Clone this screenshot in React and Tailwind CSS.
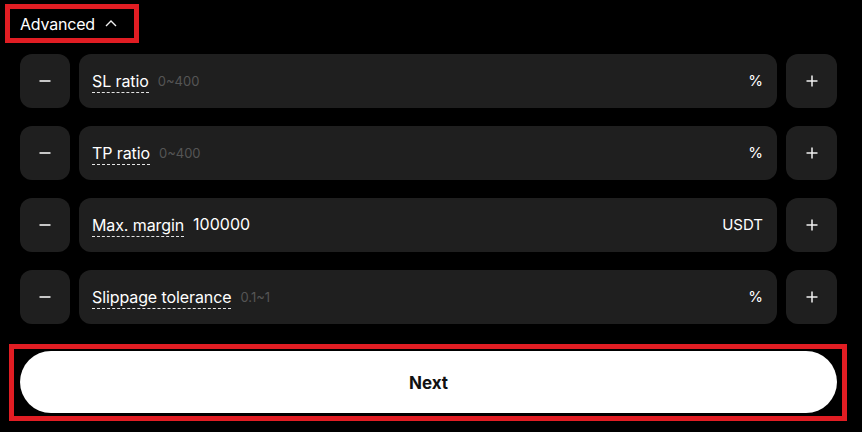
import React from "react";

const font = { fontFamily: "Inter, 'Noto Sans', sans-serif" };

function Minus() {
  return (
    <svg width="12" height="12" viewBox="0 0 12 12">
      <line x1="0.5" y1="6" x2="11.5" y2="6" stroke="#f2f2f2" strokeWidth="1.6" />
    </svg>
  );
}
function Plus() {
  return (
    <svg width="12" height="12" viewBox="0 0 12 12">
      <line x1="0.5" y1="6" x2="11.5" y2="6" stroke="#f2f2f2" strokeWidth="1.5" />
      <line x1="6" y1="0.5" x2="6" y2="11.5" stroke="#f2f2f2" strokeWidth="1.5" />
    </svg>
  );
}

function Row({ label, placeholder, value, unit }) {
  return (
    <div className="flex h-[54px] gap-[9px]">
      <button className="w-[50px] h-full rounded-[12px] bg-[#1f1f1f] flex items-center justify-center">
        <Minus />
      </button>
      <div className="flex-1 h-full rounded-[12px] bg-[#1f1f1f] flex items-center pl-[13px] pr-[14px]">
        <span className="text-[16px] text-white leading-[20px] border-b border-dashed border-[#e5e5e5] pb-[1px] tracking-[-0.1px] mt-[2px]">
          {label}
        </span>
        {value ? (
          <span className="ml-[9px] text-[16px] text-white leading-[20px] mt-[-2px]">{value}</span>
        ) : (
          <span className="ml-[9px] text-[13px] text-[#555555] leading-[20px] mt-[-1px]">{placeholder}</span>
        )}
        <span className="ml-auto text-[15px] text-white leading-[20px] mt-[-1px]">{unit}</span>
      </div>
      <button className="w-[51px] h-full rounded-[12px] bg-[#1f1f1f] flex items-center justify-center">
        <Plus />
      </button>
    </div>
  );
}

export default function App() {
  return (
    <div className="w-[862px] h-[432px] bg-black pl-[20px] pr-[25px] pt-[4px] overflow-hidden" style={font}>
      <div className="ml-[-15px] w-[134px] h-[39px] border-[5px] border-[#e11d23] flex items-center pl-[10px] gap-[10px]">
        <span className="text-[16px] text-white leading-[20px] tracking-[-0.2px]">Advanced</span>
        <svg width="12" height="8" viewBox="0 0 12 8" className="mt-[-2px]">
          <polyline points="1,7 6,2 11,7" fill="none" stroke="#f0f0f0" strokeWidth="1.4" />
        </svg>
      </div>
      <div className="mt-[11px] flex flex-col gap-[18px]">
        <Row label="SL ratio" placeholder="0~400" unit="%" />
        <Row label="TP ratio" placeholder="0~400" unit="%" />
        <Row label="Max. margin" value="100000" unit="USDT" />
        <Row label="Slippage tolerance" placeholder="0.1~1" unit="%" />
      </div>
      <div className="mt-[20px] ml-[-11px] w-[838px] h-[77px] border-[5px] border-[#e11d23] pt-[2px] pl-[6px]">
        <button className="w-[817px] h-[62px] rounded-full bg-white flex items-center justify-center text-[17px] font-bold text-[#111111] pt-[3px]">
          Next
        </button>
      </div>
    </div>
  );
}
